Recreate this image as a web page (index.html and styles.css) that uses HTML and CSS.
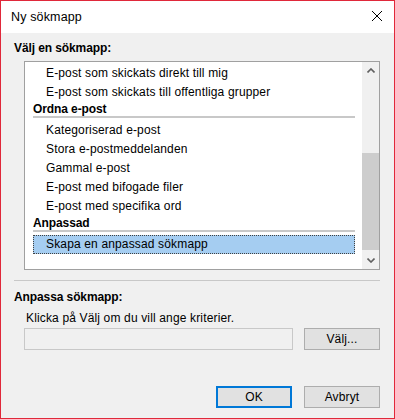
FILE: index.html
```html
<!DOCTYPE html>
<html lang="sv">
<head>
    <meta charset="UTF-8">
    <title>Ny sökmapp</title>
    <link rel="stylesheet" href="styles.css">
</head>
<body>
    <div class="window">
        <div class="titlebar">
            <span class="title">Ny sökmapp</span>
            <svg class="close" width="12" height="12" viewBox="0 0 12 12">
                <path d="M1 1 L11 11 M11 1 L1 11" stroke="#000" stroke-width="1" fill="none"/>
            </svg>
        </div>
        <div class="content">
            <div class="label">Välj en sökmapp:</div>
            <div class="listbox">
                <div class="list">
                    <div class="item">E-post som skickats direkt till mig</div>
                    <div class="item">E-post som skickats till offentliga grupper</div>
                    <div class="group">Ordna e-post</div>
                    <div class="item">Kategoriserad e-post</div>
                    <div class="item">Stora e-postmeddelanden</div>
                    <div class="item">Gammal e-post</div>
                    <div class="item">E-post med bifogade filer</div>
                    <div class="item">E-post med specifika ord</div>
                    <div class="group">Anpassad</div>
                    <div class="item selected">Skapa en anpassad sökmapp</div>
                </div>
                <div class="scrollbar">
                    <div class="sb-arrow">
                        <svg width="8" height="5" viewBox="0 0 8 5"><path d="M0.5 4.5 L4 1 L7.5 4.5" stroke="#606060" stroke-width="1.6" fill="none"/></svg>
                    </div>
                    <div class="sb-track">
                        <div class="sb-thumb"></div>
                    </div>
                    <div class="sb-arrow">
                        <svg width="8" height="5" viewBox="0 0 8 5"><path d="M0.5 0.5 L4 4 L7.5 0.5" stroke="#606060" stroke-width="1.6" fill="none"/></svg>
                    </div>
                </div>
            </div>
            <div class="separator"></div>
            <div class="label second">Anpassa sökmapp:</div>
            <div class="hint">Klicka på Välj om du vill ange kriterier.</div>
            <div class="criteria-row">
                <div class="textbox"></div>
                <button class="btn">Välj...</button>
            </div>
            <div class="footer">
                <button class="btn default">OK</button>
                <button class="btn">Avbryt</button>
            </div>
        </div>
    </div>
</body>
</html>
```

FILE: styles.css
```css
body {
    margin: 0;
    padding: 0;
    font-family: "Segoe UI", "Liberation Sans", Arial, sans-serif;
    font-size: 12px;
    letter-spacing: 0.15px;
    color: #000000;
}

.window {
    width: 395px;
    height: 419px;
    box-sizing: border-box;
    border: 1px solid #e0283a;
    background-color: #f0f0f0;
    display: flex;
    flex-direction: column;
}

.titlebar {
    height: 32px;
    background-color: #ffffff;
    display: flex;
    align-items: center;
    justify-content: space-between;
    padding: 0 11px 0 10px;
}

.title {
    font-size: 12.5px;
    margin-top: -1px;
}

.close {
    margin-top: -3px;
}

.content {
    flex: 1;
    display: flex;
    flex-direction: column;
    padding: 0 14px 10px 13px;
}

.label {
    font-weight: bold;
    letter-spacing: -0.1px;
    line-height: 16px;
    margin-top: 7px;
}

.listbox {
    margin: 5px 0 0 10px;
    height: 209px;
    box-sizing: border-box;
    border: 1px solid #a0a0a0;
    background-color: #ffffff;
    display: flex;
}

.list {
    flex: 1;
    padding: 2px 7px 0 8px;
}

.item {
    height: 19px;
    line-height: 19px;
    padding-left: 13px;
    white-space: nowrap;
}

.group {
    font-weight: bold;
    letter-spacing: -0.1px;
    height: 14px;
    line-height: 15px;
    border-bottom: 2px solid #c8c8c8;
    margin-bottom: 3px;
}

.item.selected {
    background-color: #a5cdf1;
    border: 1px dotted #404040;
    height: 17px;
    line-height: 17px;
    padding-left: 12px;
}

.scrollbar {
    width: 17px;
    background-color: #f0f0f0;
    display: flex;
    flex-direction: column;
}

.sb-arrow {
    height: 17px;
    display: flex;
    align-items: center;
    justify-content: center;
}

.sb-track {
    flex: 1;
}

.sb-thumb {
    margin-top: 74px;
    height: 97px;
    background-color: #cdcdcd;
}

.separator {
    margin-top: 10px;
    border-top: 1px solid #c8c8c8;
}

.label.second {
    margin-top: 8px;
}

.hint {
    line-height: 16px;
    margin-top: 5px;
    padding-left: 12px;
}

.criteria-row {
    display: flex;
    gap: 11px;
    margin: 2px 0 0 10px;
}

.textbox {
    flex: 1;
    height: 20px;
    border: 1px solid #c8c8c8;
    background-color: #f0f0f0;
}

.btn {
    width: 76px;
    height: 22px;
    box-sizing: border-box;
    font-family: inherit;
    font-size: 12px;
    letter-spacing: 0.15px;
    color: #000000;
    background-color: #e1e1e1;
    border: 1px solid #adadad;
    padding: 0;
}

.footer {
    margin-top: auto;
    display: flex;
    justify-content: flex-end;
    gap: 12px;
}

.btn.default {
    border: 2px solid #0078d7;
}
```
